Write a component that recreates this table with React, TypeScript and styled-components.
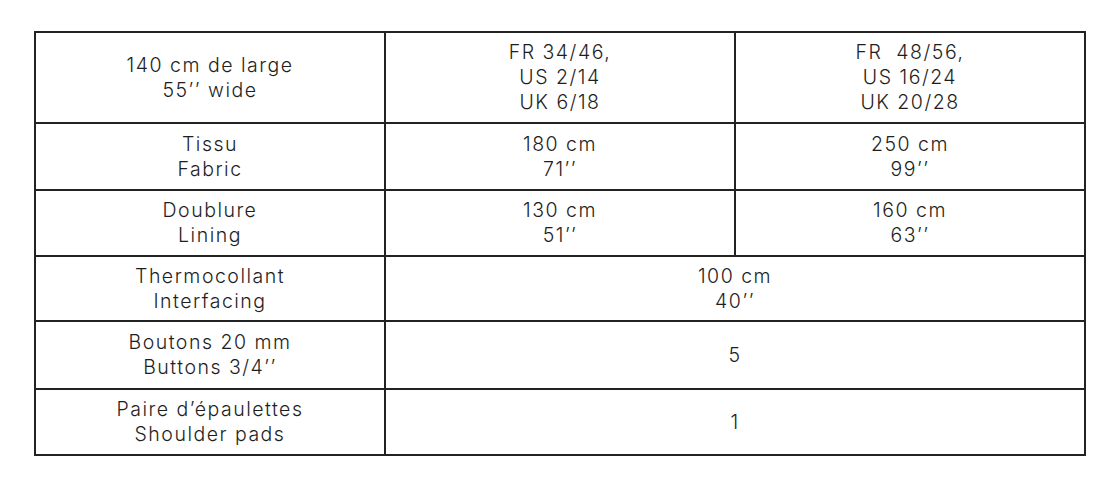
import styled, { createGlobalStyle } from "styled-components";

const GlobalStyle = createGlobalStyle`
  html, body {
    margin: 0;
    padding: 0;
    background: #ffffff;
  }
  body {
    font-family: "Inter", "Liberation Sans", sans-serif;
    color: #222;
  }
`;

const Page = styled.div`
  padding: 31px 0 0 34px;
`;

const Table = styled.table`
  border-collapse: collapse;
  table-layout: fixed;
  width: 1050px;
  border: 2px solid #222;
`;

const Row = styled.tr<{ $h: number }>`
  height: ${(p) => p.$h}px;
`;

const Cell = styled.td`
  border: 2px solid #222;
  padding: 0;
  text-align: center;
  vertical-align: middle;
  font-size: 19.5px;
  font-weight: 300;
  line-height: 25px;
  color: #1e1e1e;
  letter-spacing: 1.5px;
`;

const Line = styled.div`
  white-space: pre;
`;

type RowData = {
  label: string[];
  cells: string[][];
  h: number;
};

const rows: RowData[] = [
  {
    label: ["140 cm de large", "55’’ wide"],
    cells: [
      ["FR 34/46,", "US 2/14", "UK 6/18"],
      ["FR  48/56,", "US 16/24", "UK 20/28"],
    ],
    h: 91,
  },
  { label: ["Tissu", "Fabric"], cells: [["180 cm", "71’’"], ["250 cm", "99’’"]], h: 67 },
  { label: ["Doublure", "Lining"], cells: [["130 cm", "51’’"], ["160 cm", "63’’"]], h: 66 },
  { label: ["Thermocollant", "Interfacing"], cells: [["100 cm", "40’’"]], h: 65 },
  { label: ["Boutons 20 mm", "Buttons 3/4’’"], cells: [["5"]], h: 68 },
  { label: ["Paire d’épaulettes", "Shoulder pads"], cells: [["1"]], h: 66 },
];

const Lines = ({ items }: { items: string[] }) => (
  <>
    {items.map((t, i) => (
      <Line key={i}>{t}</Line>
    ))}
  </>
);

export default function App() {
  return (
    <Page>
      <GlobalStyle />
      <Table>
        <colgroup>
          <col style={{ width: "350px" }} />
          <col style={{ width: "350px" }} />
          <col style={{ width: "350px" }} />
        </colgroup>
        <tbody>
          {rows.map((r, i) => (
            <Row key={i} $h={r.h}>
              <Cell>
                <Lines items={r.label} />
              </Cell>
              {r.cells.length === 1 ? (
                <Cell colSpan={2}>
                  <Lines items={r.cells[0]} />
                </Cell>
              ) : (
                r.cells.map((c, j) => (
                  <Cell key={j}>
                    <Lines items={c} />
                  </Cell>
                ))
              )}
            </Row>
          ))}
        </tbody>
      </Table>
    </Page>
  );
}
